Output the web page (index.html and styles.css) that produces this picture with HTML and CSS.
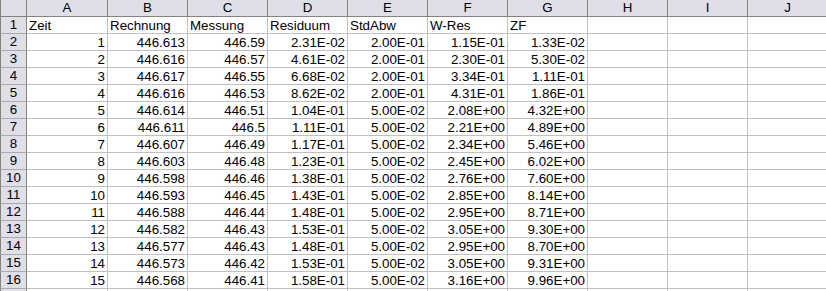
FILE: index.html
```html
<!DOCTYPE html>
<html>
<head>
<meta charset="utf-8">
<link rel="stylesheet" href="styles.css">
</head>
<body>
<div class="sheet">
<div class="h corner"></div><div class="h">A</div><div class="h">B</div><div class="h">C</div><div class="h">D</div><div class="h">E</div><div class="h">F</div><div class="h">G</div><div class="h">H</div><div class="h">I</div><div class="h">J</div>
<div class="r">1</div><div class="c t">Zeit</div><div class="c t">Rechnung</div><div class="c t">Messung</div><div class="c t">Residuum</div><div class="c t">StdAbw</div><div class="c t">W-Res</div><div class="c t">ZF</div><div class="c"></div><div class="c"></div><div class="c"></div>
<div class="r">2</div><div class="c n">1</div><div class="c n">446.613</div><div class="c n">446.59</div><div class="c n">2.31E-02</div><div class="c n">2.00E-01</div><div class="c n">1.15E-01</div><div class="c n">1.33E-02</div><div class="c"></div><div class="c"></div><div class="c"></div>
<div class="r">3</div><div class="c n">2</div><div class="c n">446.616</div><div class="c n">446.57</div><div class="c n">4.61E-02</div><div class="c n">2.00E-01</div><div class="c n">2.30E-01</div><div class="c n">5.30E-02</div><div class="c"></div><div class="c"></div><div class="c"></div>
<div class="r">4</div><div class="c n">3</div><div class="c n">446.617</div><div class="c n">446.55</div><div class="c n">6.68E-02</div><div class="c n">2.00E-01</div><div class="c n">3.34E-01</div><div class="c n">1.11E-01</div><div class="c"></div><div class="c"></div><div class="c"></div>
<div class="r">5</div><div class="c n">4</div><div class="c n">446.616</div><div class="c n">446.53</div><div class="c n">8.62E-02</div><div class="c n">2.00E-01</div><div class="c n">4.31E-01</div><div class="c n">1.86E-01</div><div class="c"></div><div class="c"></div><div class="c"></div>
<div class="r">6</div><div class="c n">5</div><div class="c n">446.614</div><div class="c n">446.51</div><div class="c n">1.04E-01</div><div class="c n">5.00E-02</div><div class="c n">2.08E+00</div><div class="c n">4.32E+00</div><div class="c"></div><div class="c"></div><div class="c"></div>
<div class="r">7</div><div class="c n">6</div><div class="c n">446.611</div><div class="c n">446.5</div><div class="c n">1.11E-01</div><div class="c n">5.00E-02</div><div class="c n">2.21E+00</div><div class="c n">4.89E+00</div><div class="c"></div><div class="c"></div><div class="c"></div>
<div class="r">8</div><div class="c n">7</div><div class="c n">446.607</div><div class="c n">446.49</div><div class="c n">1.17E-01</div><div class="c n">5.00E-02</div><div class="c n">2.34E+00</div><div class="c n">5.46E+00</div><div class="c"></div><div class="c"></div><div class="c"></div>
<div class="r">9</div><div class="c n">8</div><div class="c n">446.603</div><div class="c n">446.48</div><div class="c n">1.23E-01</div><div class="c n">5.00E-02</div><div class="c n">2.45E+00</div><div class="c n">6.02E+00</div><div class="c"></div><div class="c"></div><div class="c"></div>
<div class="r">10</div><div class="c n">9</div><div class="c n">446.598</div><div class="c n">446.46</div><div class="c n">1.38E-01</div><div class="c n">5.00E-02</div><div class="c n">2.76E+00</div><div class="c n">7.60E+00</div><div class="c"></div><div class="c"></div><div class="c"></div>
<div class="r">11</div><div class="c n">10</div><div class="c n">446.593</div><div class="c n">446.45</div><div class="c n">1.43E-01</div><div class="c n">5.00E-02</div><div class="c n">2.85E+00</div><div class="c n">8.14E+00</div><div class="c"></div><div class="c"></div><div class="c"></div>
<div class="r">12</div><div class="c n">11</div><div class="c n">446.588</div><div class="c n">446.44</div><div class="c n">1.48E-01</div><div class="c n">5.00E-02</div><div class="c n">2.95E+00</div><div class="c n">8.71E+00</div><div class="c"></div><div class="c"></div><div class="c"></div>
<div class="r">13</div><div class="c n">12</div><div class="c n">446.582</div><div class="c n">446.43</div><div class="c n">1.53E-01</div><div class="c n">5.00E-02</div><div class="c n">3.05E+00</div><div class="c n">9.30E+00</div><div class="c"></div><div class="c"></div><div class="c"></div>
<div class="r">14</div><div class="c n">13</div><div class="c n">446.577</div><div class="c n">446.43</div><div class="c n">1.48E-01</div><div class="c n">5.00E-02</div><div class="c n">2.95E+00</div><div class="c n">8.70E+00</div><div class="c"></div><div class="c"></div><div class="c"></div>
<div class="r">15</div><div class="c n">14</div><div class="c n">446.573</div><div class="c n">446.42</div><div class="c n">1.53E-01</div><div class="c n">5.00E-02</div><div class="c n">3.05E+00</div><div class="c n">9.31E+00</div><div class="c"></div><div class="c"></div><div class="c"></div>
<div class="r">16</div><div class="c n">15</div><div class="c n">446.568</div><div class="c n">446.41</div><div class="c n">1.58E-01</div><div class="c n">5.00E-02</div><div class="c n">3.16E+00</div><div class="c n">9.96E+00</div><div class="c"></div><div class="c"></div><div class="c"></div>
<div class="r"></div><div class="c"></div><div class="c"></div><div class="c"></div><div class="c"></div><div class="c"></div><div class="c"></div><div class="c"></div><div class="c"></div><div class="c"></div><div class="c"></div>
</div>
</body>
</html>
```
FILE: styles.css
```css
html, body {
  margin: 0;
  padding: 0;
  background: #ffffff;
  overflow: hidden;
}
.sheet {
  display: grid;
  grid-template-columns: 27px 81px repeat(9, 80px);
  grid-auto-rows: 17px;
  width: 826px;
  height: 291px;
  overflow: hidden;
  font-family: "Liberation Sans", Arial, sans-serif;
  font-size: 13.33px;
  color: #000;
}
.sheet > div {
  box-sizing: border-box;
  white-space: nowrap;
  overflow: hidden;
  line-height: 16px;
}
.h {
  background: #dfdfe8;
  border-right: 1px solid #85837a;
  border-bottom: 1px solid #85837a;
  text-align: center;
}
.corner {
  border-left: 1px solid #85837a;
}
.r {
  background: #dfdfe8;
  border-left: 1px solid #85837a;
  border-right: 1px solid #85837a;
  border-bottom: 1px solid #a9a9b3;
  text-align: center;
}
.c {
  border-right: 1px solid #c0c0c0;
  border-bottom: 1px solid #c0c0c0;
  padding: 1px 2px 0 2px;
}
.n {
  text-align: right;
}
.t {
  text-align: left;
}
```
